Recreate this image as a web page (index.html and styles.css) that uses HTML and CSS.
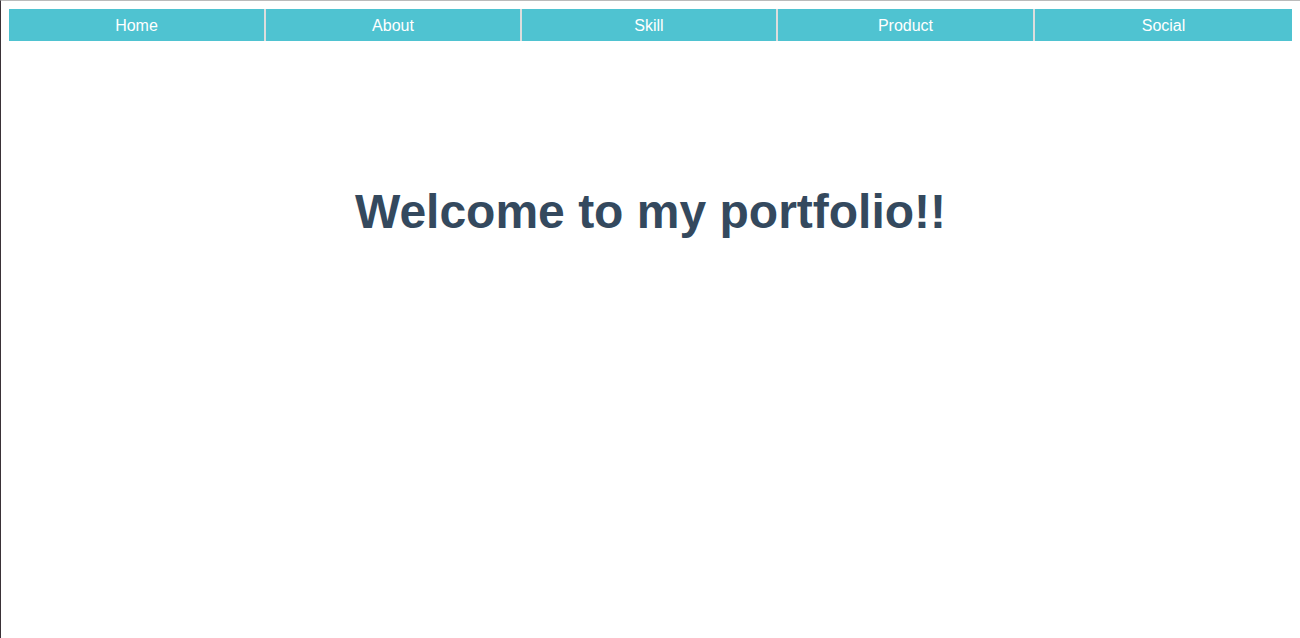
FILE: index.html
```html
<!DOCTYPE html>
<html lang="en">
<head>
<meta charset="utf-8">
<title>Portfolio</title>
<link rel="stylesheet" href="styles.css">
</head>
<body>
<nav class="nav">
  <a class="nav-item" href="#">Home</a>
  <a class="nav-item" href="#">About</a>
  <a class="nav-item" href="#">Skill</a>
  <a class="nav-item" href="#">Product</a>
  <a class="nav-item" href="#">Social</a>
</nav>
<main class="hero">
  <h1 class="hero-title">Welcome to my portfolio!!</h1>
</main>
</body>
</html>
```
FILE: styles.css
```css
html {
  border-top: 1px solid #bbbbbb;
  border-left: 1px solid #3a3237;
  min-height: 100%;
  box-sizing: border-box;
  background: #ffffff;
}
body {
  margin: 8px;
  font-family: "Liberation Sans", Arial, sans-serif;
}
.nav {
  display: grid;
  grid-template-columns: 255fr 254fr 254fr 255fr 257fr;
  gap: 2px;
  background: #dddddd;
}
.nav-item {
  box-sizing: border-box;
  height: 32px;
  padding-top: 2px;
  display: flex;
  align-items: center;
  justify-content: center;
  background: #4fc3d1;
  color: #ffffff;
  font-size: 16px;
  text-decoration: none;
}
.hero {
  padding-top: 143px;
  text-align: center;
}
.hero-title {
  margin: 0;
  font-size: 48px;
  font-weight: bold;
  color: #34495e;
}
```
